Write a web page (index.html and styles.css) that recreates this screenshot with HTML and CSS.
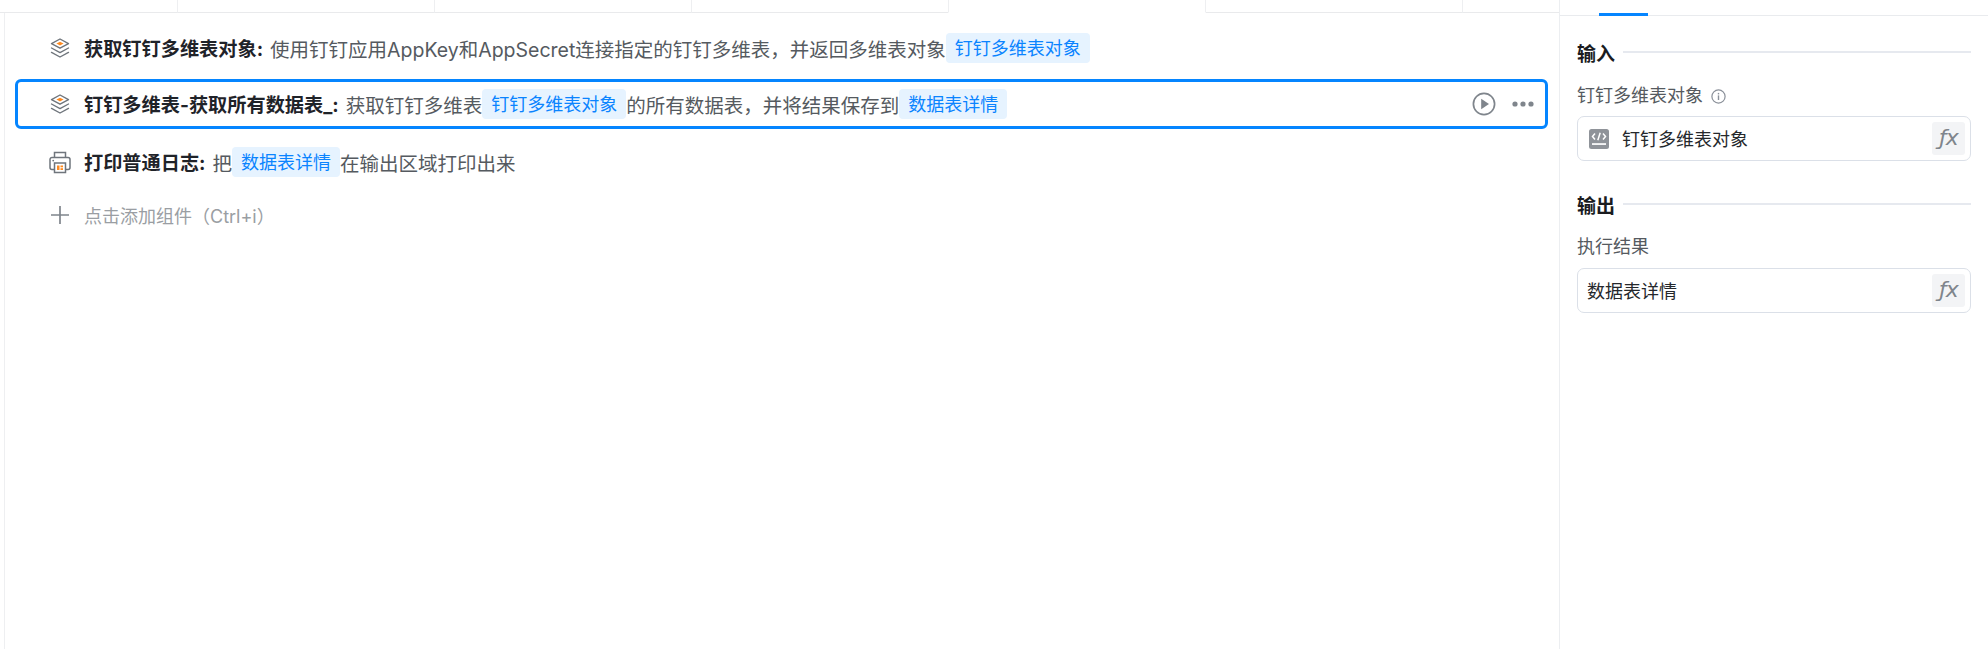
FILE: index.html
```html
<!DOCTYPE html>
<html lang="zh-CN">
<head>
<meta charset="utf-8">
<title>流程编辑</title>
<link rel="stylesheet" href="styles.css">
</head>
<body>
<svg class="defs" width="0" height="0" aria-hidden="true">
  <symbol id="layers" viewBox="0 0 20 20">
    <path d="M10 1 L18.5 5.6 L10 10.2 L1.5 5.6 Z" fill="none" stroke="#6f757c" stroke-width="1.4" stroke-linejoin="round"/>
    <path d="M10 3.7 L13.6 5.6 L10 7.5 L6.4 5.6 Z" fill="#ff8a1f"/>
    <path d="M1.5 10 L10 14.6 L18.5 10" fill="none" stroke="#6f757c" stroke-width="1.4" stroke-linecap="round" stroke-linejoin="round"/>
    <path d="M1.5 14.4 L10 19 L18.5 14.4" fill="none" stroke="#6f757c" stroke-width="1.4" stroke-linecap="round" stroke-linejoin="round"/>
  </symbol>
</svg>
<div class="page">
  <main class="main">
    <div class="tabs">
      <div class="tab tab-first"></div>
      <div class="tab"></div>
      <div class="tab"></div>
      <div class="tab"></div>
      <div class="tab tab-active"></div>
      <div class="tab"></div>
      <div class="tab tab-last"></div>
    </div>
    <div class="canvas">
      <div class="row row-first">
        <svg class="row-icon" width="20" height="20"><use href="#layers"/></svg>
        <span class="row-title">获取钉钉多维表对象:</span>
        <span class="row-text">使用钉钉应用AppKey和AppSecret连接指定的钉钉多维表，并返回多维表对象</span>
        <span class="tag">钉钉多维表对象</span>
      </div>
      <div class="row row-selected">
        <svg class="row-icon" width="20" height="20"><use href="#layers"/></svg>
        <span class="row-title">钉钉多维表-获取所有数据表_:</span>
        <span class="row-text">获取钉钉多维表</span>
        <span class="tag">钉钉多维表对象</span>
        <span class="row-text">的所有数据表，并将结果保存到</span>
        <span class="tag">数据表详情</span>
        <div class="row-actions">
          <svg width="24" height="24" viewBox="0 0 24 24">
            <circle cx="12" cy="12" r="10.6" fill="none" stroke="#7f858c" stroke-width="1.7"/>
            <path d="M9.2 6.8 L17 12 L9.2 17.2 Z" fill="#7f858c"/>
          </svg>
          <svg width="22" height="6" viewBox="0 0 22 6">
            <circle cx="3" cy="3" r="2.6" fill="#7f858c"/>
            <circle cx="11" cy="3" r="2.6" fill="#7f858c"/>
            <circle cx="19" cy="3" r="2.6" fill="#7f858c"/>
          </svg>
        </div>
      </div>
      <div class="row">
        <svg class="row-icon row-icon-wide" width="22" height="23" viewBox="0 0 22 23">
          <path d="M5.5 6.5 V1.5 H16.5 V6.5" fill="none" stroke="#6f757c" stroke-width="1.5"/>
          <path d="M5.5 18.5 H3 A2 2 0 0 1 1 16.5 V8.5 A2 2 0 0 1 3 6.5 H19 A2 2 0 0 1 21 8.5 V16.5 A2 2 0 0 1 19 18.5 H16.5" fill="none" stroke="#6f757c" stroke-width="1.5"/>
          <rect x="5.5" y="12" width="11" height="9.5" fill="#fff" stroke="#6f757c" stroke-width="1.5"/>
          <rect x="8" y="14.5" width="2.5" height="4.5" fill="#ff8a1f"/>
          <rect x="11.5" y="14.5" width="2.5" height="1.8" fill="#ff8a1f"/>
          <rect x="11.5" y="17.2" width="2.5" height="1.8" fill="#ff8a1f"/>
          <circle cx="4.2" cy="9.6" r="0.9" fill="#6f757c"/>
        </svg>
        <span class="row-title">打印普通日志:</span>
        <span class="row-text">把</span>
        <span class="tag">数据表详情</span>
        <span class="row-text">在输出区域打印出来</span>
      </div>
      <div class="row row-add">
        <svg class="row-icon" width="20" height="20" viewBox="0 0 20 20">
          <path d="M10 1 V19 M1 10 H19" stroke="#7f858c" stroke-width="1.7" fill="none"/>
        </svg>
        <span class="add-text">点击添加组件（Ctrl+i）</span>
      </div>
    </div>
  </main>
  <aside class="panel">
    <div class="panel-tabs"><div class="panel-tab"></div></div>
    <div class="panel-body">
      <div class="section-title section-input"><span>输入</span><i class="section-line"></i></div>
      <div class="field-label">钉钉多维表对象
        <svg class="info" width="15" height="15" viewBox="0 0 15 15">
          <circle cx="7.5" cy="7.5" r="6.6" fill="none" stroke="#8a9099" stroke-width="1.2"/>
          <rect x="6.8" y="6.4" width="1.4" height="4.6" fill="#8a9099"/>
          <rect x="6.8" y="3.9" width="1.4" height="1.5" fill="#8a9099"/>
        </svg>
      </div>
      <div class="field">
        <svg class="var-icon" width="20" height="20" viewBox="0 0 20 20">
          <rect width="20" height="20" rx="2.5" fill="#8f9399"/>
          <path d="M6 4.5 L3.5 7.5 L6 10.5 M14 4.5 L16.5 7.5 L14 10.5 M11.2 3.8 L8.8 11.2" fill="none" stroke="#fff" stroke-width="1.5"/>
          <rect x="3" y="14.2" width="14" height="1.7" fill="#fff"/>
        </svg>
        <span class="field-value">钉钉多维表对象</span>
        <span class="fx">ƒx</span>
      </div>
      <div class="section-title section-output"><span>输出</span><i class="section-line"></i></div>
      <div class="field-label field-label-tight">执行结果</div>
      <div class="field field-loose">
        <span class="field-value">数据表详情</span>
        <span class="fx">ƒx</span>
      </div>
    </div>
  </aside>
</div>
</body>
</html>
```
FILE: styles.css
```css
* { box-sizing: border-box; }
html, body { margin: 0; padding: 0; background: #fff; overflow: hidden; }
body { font-family: "Inter", "Noto Sans CJK SC", sans-serif; font-size: 18px; }
.defs { position: absolute; }
.page { display: flex; height: 649px; }

.main { width: 1559px; flex: none; display: flex; flex-direction: column; }
.tabs { display: flex; height: 13px; flex: none; }
.tab { width: 257px; flex: none; border-right: 1px solid #eeeff1; border-bottom: 1px solid #e9eaec; }
.tab-first { width: 178px; }
.tab-active { border-bottom-color: #fff; border-left: 1px solid #eeeff1; margin-left: -1px; width: 258px; }
.tab-last { flex: 1; border-right: 0; }

.canvas { flex: 1; margin-left: 4px; border-left: 1px solid #eeeff1; padding: 10px 0 0 10px; }
.row { width: 1533px; height: 50px; display: flex; align-items: center; padding-left: 32px; border: 3px solid transparent; border-radius: 6px; white-space: nowrap; font-size: 19.5px; }
.row-first { margin-bottom: 6px; }
.row-selected { border-color: #0585ff; margin-bottom: 8px; padding-right: 11px; }
.row-icon { flex: none; margin-right: 14px; }
.row-icon-wide { margin: 0 13px 0 -1px; }
.row-title { font-weight: 700; color: #1f2329; margin-right: 7px; font-size: 19.2px; }
.row-text { color: #555a60; }
.tag { background: #e6f3ff; color: #0a84ff; height: 30px; line-height: 32px; padding: 0 9px; border-radius: 4px; font-size: 18px; }
.row-actions { margin-left: auto; display: flex; align-items: center; gap: 16px; }
.row-add { margin-top: 8px; height: 40px; font-size: 18px; }
.add-text { color: #9a9ea3; }

.panel { flex: 1; border-left: 1px solid #eceef1; display: flex; flex-direction: column; }
.panel-tabs { height: 16px; flex: none; border-bottom: 1px solid #e9ebee; padding-left: 39px; display: flex; align-items: flex-end; }
.panel-tab { width: 49px; height: 3px; margin-bottom: -1px; background: #0585ff; }
.panel-body { padding: 0 17px 0 17px; }
.section-title { display: flex; align-items: center; gap: 8px; height: 24px; font-weight: 700; color: #1a1c1f; font-size: 19px; }
.section-input { margin-top: 24px; }
.section-output { margin-top: 31px; }
.section-line { flex: 1; height: 2px; background: #e6e9ef; }
.field-label { margin-top: 20px; height: 24px; line-height: 24px; color: #555a60; display: flex; align-items: center; gap: 8px; }
.field-label-tight { margin-top: 19px; }
.info { flex: none; }
.field { margin-top: 8px; height: 45px; border: 1.5px solid #dbe0e8; border-radius: 7px; display: flex; align-items: center; padding: 0 5px 0 9px; }
.field-loose { margin-top: 9px; }
.var-icon { flex: none; margin: 0 13px 0 2px; }
.field-value { color: #25282c; padding-bottom: 2px; }
.fx { margin-left: auto; width: 33px; height: 33px; background: #f3f4f6; border-radius: 3px; color: #7f858c; font-family: "DejaVu Sans", sans-serif; font-style: italic; font-size: 22px; line-height: 32px; text-align: center; letter-spacing: -1px; }
```
